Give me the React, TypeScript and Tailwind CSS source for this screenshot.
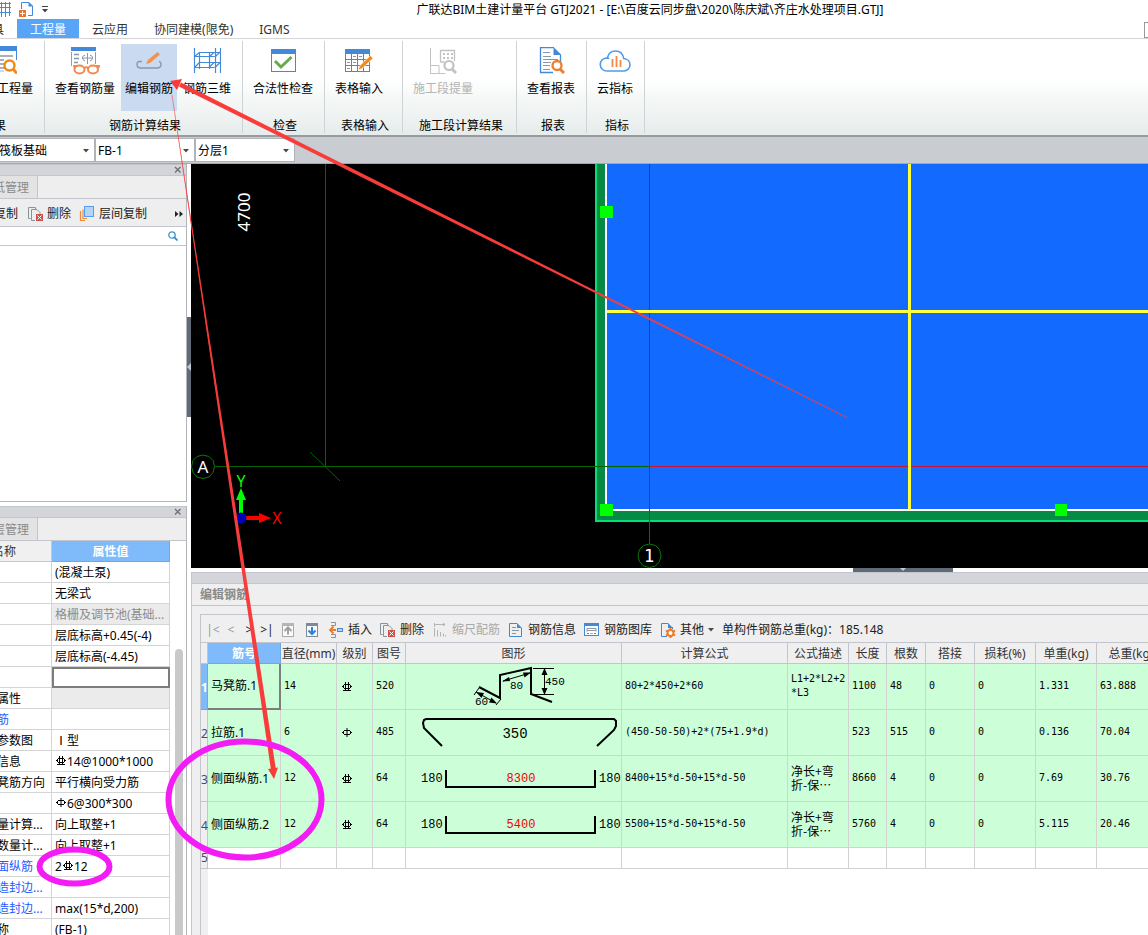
import type { ReactNode } from 'react'
import clsx from 'clsx'

const MONO = "font-['DejaVu_Sans_Mono','Noto_Sans_CJK_SC',monospace]"
const SVG_MONO = "'Liberation Mono', monospace"

/* ---------- rebar grade symbols ---------- */

function Grade({ level, className }: { level: 1 | 3; className?: string }) {
  return (
    <svg
      className={clsx('inline-block', className)}
      width="12"
      height="12"
      viewBox="0 0 12 12"
      fill="none"
      stroke="#000"
      role="img"
      aria-label={level === 1 ? 'HPB300' : 'HRB400'}
    >
      <path d="M3 3.500h6M3 7.500h6M2.500 4v3M9.500 4v3M1.500 5v1M10.500 5v1" />
      {level === 1 ? <path d="M6 1v9" /> : <path d="M4.500 1v9M7.500 1v9M2 9.500h8" />}
    </svg>
  )
}

/* ---------- ribbon icons ---------- */

function WindowSearchIcon() {
  return (
    <svg width="28" height="28" viewBox="0 0 28 28" fill="none">
      <path d="M3 4v21h12" stroke="#8fb3e0" />
      <rect x="3" y="0" width="25" height="5" fill="#4488d8" />
      <path d="M27.500 5v9" stroke="#4488d8" />
      <path d="M7 10h17M7 14h8M7 18h8M7 22h9" stroke="#8a97a5" strokeWidth="1.300" />
      <circle cx="20.500" cy="19.500" r="5" fill="#fff" stroke="#ef8a1d" strokeWidth="2.400" />
      <path d="M24 23l4 4.500" stroke="#ef8a1d" strokeWidth="3" />
    </svg>
  )
}

function GlassesIcon() {
  return (
    <svg width="30" height="30" viewBox="0 0 30 30" fill="none">
      <path d="M1.500 5v14M25.500 5v12" stroke="#6fa3e2" />
      <rect x="1" y="0" width="25" height="4" fill="#4488d8" />
      <path d="M4 7.500h5M4 11.500h5M4 15.500h4" stroke="#8a97a5" strokeWidth="1.300" />
      <path
        d="M17.500 6v11M15 8.500c-2 0-2.500 1-2.500 2.500s1 2.500 2.500 2.500M20 8.500c2 0 2.500 1 2.500 2.500s-1 2.500-2.500 2.500M12 11h11"
        stroke="#8a97a5"
      />
      <ellipse cx="9.500" cy="22.500" rx="5" ry="4" stroke="#f2894a" strokeWidth="2" fill="#fff" />
      <ellipse cx="23" cy="22.500" rx="5" ry="4" stroke="#f2894a" strokeWidth="2" fill="#fff" />
      <path d="M14 21c1.500-1 3-1 4.500 0M4.500 21l-.5-2h3M28.500 21l.5-2h-3" stroke="#f2894a" strokeWidth="1.800" />
    </svg>
  )
}

function EditRebarIcon() {
  return (
    <svg width="28" height="28" viewBox="0 0 28 28" fill="none">
      <path
        d="M7 14.500H4.500a2.500 2.500 0 0 0-2.500 3c0 2 1.500 3.500 4 3.500h16c2.500 0 4-1.500 4-3.500a2.500 2.500 0 0 0-2-3"
        stroke="#8a99a8"
        strokeWidth="1.400"
      />
      <path d="M11 17l2-4L22.500 5l2.500 2.500L15 16z" fill="#f2924f" />
    </svg>
  )
}

function Rebar3dIcon() {
  return (
    <svg width="28" height="28" viewBox="0 0 28 28" fill="none" stroke="#4488d8" strokeWidth="1.200">
      <path d="M1.500 1v25M6.500 5v17M16.500 5v17M22.500 1v25M27.500 1v25" />
      <path d="M1.500 9.500h20M6.500 5.500h21M1.500 20.500h20M6.500 15.500h21M1.500 9.500l5-4M1.500 20.500l5-5M16 10l5-4.500M16 20.500l5-5M22 10l5-5M22 20.500l5-5" />
    </svg>
  )
}

function CheckWindowIcon() {
  return (
    <svg width="28" height="28" viewBox="0 0 28 28" fill="none">
      <rect x="2.500" y="2.500" width="24" height="22" stroke="#4488d8" fill="#fff" />
      <rect x="2" y="2" width="25" height="5" fill="#4488d8" />
      <path d="M6 14l6 6L22.500 10" stroke="#6aa84f" strokeWidth="3" />
    </svg>
  )
}

function TableInputIcon() {
  return (
    <svg width="30" height="28" viewBox="0 0 30 28" fill="none">
      <rect x="1.500" y="2.500" width="24" height="22" stroke="#4488d8" fill="#fff" />
      <rect x="1" y="2" width="25" height="5" fill="#4488d8" />
      <path d="M1 12.500h25M1 18.500h25M7.500 7v17M13.500 7v17M19.500 7v17" stroke="#4488d8" />
      <path d="M9 9.500h3M15 9.500h3M3 15.500h3M9 15.500h3M3 21.500h3" stroke="#8a97a5" />
      <path d="M14 23l2-4.500L26.500 8.500l2.500 3L18 21.500z" fill="#ef8a1d" stroke="#fff" strokeWidth=".6" />
    </svg>
  )
}

function SectionQuantityIcon() {
  return (
    <svg width="28" height="28" viewBox="0 0 28 28" fill="none" stroke="#c2c2c2">
      <path d="M1.500 1v25.500h15M1.500 18.500h8.500v8" />
      <path d="M11.500 15V3.500h14V14M11.500 15h4" strokeWidth="1.300" />
      <path d="M14 7h2M18 7h2M22 7h2M14 11h2M18 11h2M22 11h2" strokeWidth="2" />
      <circle cx="20" cy="18.500" r="4.500" strokeWidth="2.200" fill="#fff" />
      <path d="M23 22l4 4" strokeWidth="3" />
    </svg>
  )
}

function ReportIcon() {
  return (
    <svg width="28" height="28" viewBox="0 0 28 28" fill="none">
      <path d="M23.500 8v7M17 .5H3.500v25H16" stroke="#4488d8" strokeWidth="1.300" />
      <path d="M16.500 0l8 8h-8z" fill="#4488d8" />
      <path d="M6 5.500h7M6 9.500h8M6 12.500h15M6 15.500h8M6 18.500h7M6 22.500h7" stroke="#8a97a5" />
      <circle cx="20" cy="18.500" r="4.500" fill="#fff" stroke="#ef7d2b" strokeWidth="2.300" />
      <path d="M23 22l4 4" stroke="#ef7d2b" strokeWidth="3" />
    </svg>
  )
}

function CloudIndexIcon() {
  return (
    <svg width="32" height="28" viewBox="0 0 32 28" fill="none">
      <path
        d="M8 24a6.500 6.500 0 0 1-.5-13c1 0 2 .2 2.700.7M8.500 10.500C9.500 6.500 12.500 4 16.500 4c4.500 0 7.500 3 8.200 7.500 3.800.3 6.300 3 6.300 6.300S28.300 24 25 24H8"
        stroke="#4f9bea"
        strokeWidth="1.600"
      />
      <path d="M13.500 12v8M17.500 9v11M21.500 13v7" stroke="#f2894a" strokeWidth="1.800" />
    </svg>
  )
}

/* ---------- small toolbar icons ---------- */

function DeleteIcon() {
  return (
    <svg width="16" height="16" viewBox="0 0 16 16" fill="none">
      <path d="M2.500 12.500h-2V1.500h7v1.500" stroke="#8794a0" />
      <path d="M7 14.500H3.500v-11H9l3 3V8" stroke="#8794a0" />
      <rect x="8" y="8" width="7" height="7" fill="#d0504c" />
      <path d="M9.500 9.500l4 4M13.500 9.500l-4 4" stroke="#fff" />
    </svg>
  )
}

function CopyLayersIcon() {
  return (
    <svg width="16" height="16" viewBox="0 0 16 16" fill="none">
      <path d="M1.500 5v9.500H6M4 3.500v9h4" stroke="#ef8a3a" strokeWidth="1.200" />
      <rect x="5.500" y=".5" width="9" height="10" fill="#b3d4fb" stroke="#5a9bee" />
    </svg>
  )
}

function MoveIcon({ down }: { down?: boolean }) {
  return (
    <svg width="16" height="16" viewBox="0 0 16 16" fill="none">
      <rect x="2.500" y="2.500" width="11" height="12" fill="#fafafa" stroke={down ? '#7b8b99' : '#a9a9a9'} />
      <rect x="2" y="1" width="12" height="3" fill={down ? '#7b8b99' : '#b5b5b5'} />
      {down ? (
        <path d="M8 5v7M4.500 8.500L8 12l3.500-3.500" stroke="#2f7fdc" strokeWidth="2" />
      ) : (
        <path d="M8 12.500V6M4.500 9L8 5.500 11.500 9" stroke="#a0a0a0" strokeWidth="2" />
      )}
    </svg>
  )
}

function InsertIcon() {
  return (
    <svg width="16" height="16" viewBox="0 0 16 16" fill="none">
      <path d="M3 .5h4.500v3H3M3 15.500h4.500v-3H3" stroke="#8794a0" />
      <path d="M2 8h6M5.500 4.500L2 8l3.500 3.500" stroke="#f07a28" strokeWidth="1.800" />
      <rect x="9.500" y="6.500" width="5" height="3" fill="#b3d4fb" stroke="#4488d8" />
    </svg>
  )
}

function ScaleIcon() {
  return (
    <svg width="16" height="16" viewBox="0 0 16 16" fill="none" stroke="#b4b4b4">
      <path d="M2.500 1v4M2 2.500h11M11 1l2 1.500L11 4M2.500 6v8.500M5.500 8v6.500M8.500 10v4.500M11.500 11.500v3M13.500 13v1.500" />
    </svg>
  )
}

function DocInfoIcon() {
  return (
    <svg width="16" height="16" viewBox="0 0 16 16" fill="none">
      <path d="M9 1.500H1.500v13h12V6" stroke="#4488d8" />
      <path d="M9 1l5 5H9z" fill="#4488d8" />
      <path d="M4 5.500h4M4 8.500h7M4 11.500h4" stroke="#8a97a5" />
    </svg>
  )
}

function LibraryIcon() {
  return (
    <svg width="16" height="16" viewBox="0 0 16 16" fill="none">
      <rect x=".5" y="1.500" width="14" height="12" fill="#fff" stroke="#4488d8" />
      <rect x="0" y="1" width="15" height="3" fill="#4488d8" />
      <path d="M3 9.500v-3h9v3M3 8.500h9" stroke="#8a97a5" />
      <path d="M3 11.500h2" stroke="#d0504c" />
      <path d="M6 11.500h3" stroke="#f0b23a" />
      <path d="M10 11.500h2" stroke="#6aa84f" />
    </svg>
  )
}

function OtherIcon() {
  return (
    <svg width="16" height="16" viewBox="0 0 16 16" fill="none">
      <path d="M7 14.500H1.500v-13H8M12.500 5v2" stroke="#4488d8" />
      <path d="M8 1l5 5H8z" fill="#4488d8" />
      <circle cx="10.500" cy="11" r="3" stroke="#f07a28" strokeWidth="2" fill="#fff" />
      <path d="M10.500 6v2M10.500 14v2M6 8.500l1.500 1M13.500 12.500l1.500 1M15 8.500l-1.500 1M7.500 12.500L6 13.500" stroke="#f07a28" strokeWidth="2" />
    </svg>
  )
}

function CloseIcon() {
  return (
    <svg width="8" height="8" viewBox="0 0 8 8" stroke="#6e7277" strokeWidth="1.400">
      <path d="M1 1l5.500 5.500M6.500 1L1 6.500" />
    </svg>
  )
}

function Caret() {
  return (
    <svg width="6" height="4" viewBox="0 0 6 4" fill="#4a4a4a">
      <path d="M0 0h6L3 3.500z" />
    </svg>
  )
}

/* ---------- header ---------- */

function TitleBar() {
  return (
    <div className="flex h-[19px] shrink-0 items-center bg-white">
      <div className="flex w-[160px] shrink-0 items-center gap-2">
        <svg width="11" height="16" viewBox="0 0 11 16" fill="none" stroke="#4488d8">
          <path d="M0 1.500h11M0 5.500h11M0 10.500h11M1.500 0v15M5.500 0v15M9.500 0v14" />
        </svg>
        <svg width="15" height="16" viewBox="0 0 15 16" fill="none">
          <path d="M2.500 7V.5H10L13.500 4v9.500H9" stroke="#4488d8" />
          <path d="M9.500 0L14 4.500H9.500z" fill="#4488d8" />
          <rect x="0" y="8" width="7" height="7" fill="#e8732a" />
          <path d="M3.500 9v5M1 11.500h5" stroke="#fff" />
        </svg>
        <svg width="6" height="7" viewBox="0 0 6 7" fill="#444">
          <path d="M0 0h6v1H0zM0 3h6L3 6.500z" />
        </svg>
      </div>
      <h1 className="-ml-2 flex-1 text-center text-xs leading-[19px] font-normal whitespace-nowrap text-black">
        广联达BIM土建计量平台 GTJ2021 - [E:\百度云同步盘\2020\陈庆斌\齐庄水处理项目.GTJ]
      </h1>
    </div>
  )
}

const TABS = ['工程量', '云应用', '协同建模(限免)', 'IGMS']

function TabStrip() {
  return (
    <nav className="flex h-5 shrink-0 items-end overflow-hidden border-b border-[#d5d5d5] bg-white">
      <button className="-ml-2 w-[25px] pt-0.5 text-left leading-[17px] text-[#333]">具</button>
      {TABS.map((tab, i) => (
        <button
          key={tab}
          className={clsx(
            'px-[13px] pt-0.5 leading-[17px] whitespace-nowrap',
            i === 0 ? 'bg-[#58a5f8] text-white' : 'text-[#333]'
          )}
        >
          {tab}
        </button>
      ))}
      <span className="ml-auto h-4 w-1 border-y border-l border-[#999]" />
    </nav>
  )
}

interface Tool {
  label: string
  icon: ReactNode
  active?: boolean
  disabled?: boolean
}

const RIBBON: { title: string; width: string; tools: Tool[] }[] = [
  {
    title: '钢筋计算结果',
    width: 'w-[198px]',
    tools: [
      { label: '查看钢筋量', icon: <GlassesIcon /> },
      { label: '编辑钢筋', icon: <EditRebarIcon />, active: true },
      { label: '钢筋三维', icon: <Rebar3dIcon /> },
    ],
  },
  { title: '检查', width: 'w-[82px]', tools: [{ label: '合法性检查', icon: <CheckWindowIcon /> }] },
  { title: '表格输入', width: 'w-[78px]', tools: [{ label: '表格输入', icon: <TableInputIcon /> }] },
  {
    title: '施工段计算结果',
    width: 'w-[114px]',
    tools: [{ label: '施工段提量', icon: <SectionQuantityIcon />, disabled: true }],
  },
  { title: '报表', width: 'w-[70px]', tools: [{ label: '查看报表', icon: <ReportIcon /> }] },
  { title: '指标', width: 'w-[58px]', tools: [{ label: '云指标', icon: <CloudIndexIcon /> }] },
]

function Ribbon() {
  return (
    <div className="flex h-[98px] shrink-0 overflow-hidden border-b-2 border-[#999c9e] bg-linear-to-b from-white from-40% to-[#e6eceb] py-[2px]">
      <div className="flex w-[45px] shrink-0 flex-col items-end border-r border-[#d0d3d4]">
        <button className="mt-[3px] flex h-[67px] shrink-0 flex-col items-end pr-[11px]">
          <span className="mr-4 flex h-[33px] items-start pt-0.5">
            <WindowSearchIcon />
          </span>
          <span className="leading-6 whitespace-nowrap">工程量</span>
        </button>
        <div className="-ml-1.5 self-start pt-[3px] leading-6">果</div>
      </div>
      {RIBBON.map((group) => (
        <div key={group.title} className={clsx('flex shrink-0 flex-col border-r border-[#d0d3d4]', group.width)}>
          <div className="mt-[3px] flex gap-0.5 pl-1.5">
            {group.tools.map((tool) => (
              <button
                key={tool.label}
                disabled={tool.disabled}
                className={clsx(
                  'flex h-[67px] flex-col items-center px-1 whitespace-nowrap',
                  tool.active && 'bg-[#c9daf1]',
                  tool.disabled ? 'text-[#b3b3b3]' : 'text-black'
                )}
              >
                <span className="flex h-[33px] items-start pt-[3px]">{tool.icon}</span>
                <span className="leading-6">{tool.label}</span>
              </button>
            ))}
          </div>
          <div className="pt-[3px] pl-[3px] text-center leading-6">{group.title}</div>
        </div>
      ))}
    </div>
  )
}

function ComboBox({ label, value, className }: { label: string; value: string; className: string }) {
  return (
    <div className={clsx('relative h-6 border border-[#b0b3b8] bg-white', className)}>
      <select
        aria-label={label}
        defaultValue={value}
        className="h-full w-full appearance-none bg-transparent pt-0.5 pl-0.5 text-xs text-black outline-none"
      >
        <option>{value}</option>
      </select>
      <span className="pointer-events-none absolute top-2.5 right-[5px]">
        <Caret />
      </span>
    </div>
  )
}

function ContextBar() {
  return (
    <div className="flex h-[27px] shrink-0 items-center overflow-hidden border-b border-[#a4a8ad] bg-[#c9ccd1]">
      <ComboBox label="构件类型" value="筏板基础" className="-ml-1 w-[99px]" />
      <ComboBox label="构件" value="FB-1" className="w-[100px]" />
      <ComboBox label="分层" value="分层1" className="w-[100px]" />
    </div>
  )
}

/* ---------- left side ---------- */

function PanelTitle() {
  return (
    <div className="flex h-3 shrink-0 items-center justify-end border-y border-[#c3c5cc] bg-[#d4d5da] pr-1">
      <button aria-label="关闭">
        <CloseIcon />
      </button>
    </div>
  )
}

function PanelTab({ label }: { label: string }) {
  return (
    <div className="flex h-[23px] shrink-0 border-b border-[#c3c5cc]">
      <button className="flex w-[38px] items-center justify-end border-r border-[#c3c5cc] bg-[#e3e3e3] pt-0.5 pr-2 whitespace-nowrap text-[#8a8a8a]">
        {label}
      </button>
    </div>
  )
}

function DrawingPanel() {
  return (
    <section className="flex h-[338px] shrink-0 flex-col overflow-hidden border-r border-b border-[#b3b5bb] bg-[#eee]">
      <PanelTitle />
      <PanelTab label="纸管理" />
      <div className="flex h-7 shrink-0 items-center border-b border-[#c3c5cc] pt-0.5 pr-[3px] text-[#222]">
        <button className="-ml-1.5 pr-2.5 whitespace-nowrap">复制</button>
        <button className="flex items-center gap-[3px] pr-2 whitespace-nowrap">
          <DeleteIcon />
          删除
        </button>
        <button className="flex items-center gap-1 whitespace-nowrap">
          <CopyLayersIcon />
          层间复制
        </button>
        <svg className="ml-auto shrink-0" width="8" height="6" viewBox="0 0 8 6" fill="#222">
          <path d="M0 0l3.500 3L0 6zM4.500 0L8 3 4.500 6z" />
        </svg>
      </div>
      <div className="flex h-[19px] shrink-0 items-center border-b border-[#c3c5cc] bg-white pr-2">
        <input aria-label="搜索" className="h-full min-w-0 flex-1 bg-transparent px-1 outline-none" />
        <svg width="10" height="10" viewBox="0 0 10 10" fill="none" stroke="#3d93c9">
          <circle cx="4" cy="4" r="3.200" strokeWidth="1.300" />
          <path d="M6.500 6.500l3 3" strokeWidth="1.800" />
        </svg>
      </div>
      <div className="flex-1 bg-white" />
    </section>
  )
}

interface Property {
  name?: string
  value?: ReactNode
  blue?: boolean
  muted?: boolean
  selected?: boolean
}

const PROPERTIES: Property[] = [
  { value: '(混凝土泵)' },
  { value: '无梁式' },
  { value: '格栅及调节池(基础...', muted: true },
  { value: '层底标高+0.45(-4)' },
  { value: '层底标高(-4.45)' },
  { selected: true },
  { name: '属性', muted: true },
  { name: '筋', blue: true },
  { name: '参数图', value: 'Ⅰ型' },
  { name: '信息', value: <><Grade level={3} className="align-[-1px]" />14@1000*1000</> },
  { name: '凳筋方向', value: '平行横向受力筋' },
  { value: <><Grade level={1} className="align-[-1px]" />6@300*300</> },
  { name: '量计算...', value: '向上取整+1' },
  { name: '数量计...', value: '向上取整+1' },
  { name: '面纵筋', value: <>2<Grade level={3} className="align-[-1px]" />12</>, blue: true },
  { name: '造封边...', blue: true },
  { name: '造封边...', value: 'max(15*d,200)', blue: true },
  { name: '称', value: '(FB-1)' },
]

function PropertyPanel() {
  return (
    <section className="flex min-h-0 flex-1 flex-col overflow-hidden border-r border-[#b3b5bb] bg-[#eee]">
      <PanelTitle />
      <PanelTab label="层管理" />
      <div className="flex min-h-0 flex-1 overflow-hidden bg-white">
        <table className="w-[170px] table-fixed border-separate border-spacing-0 self-start">
          <colgroup>
            <col className="w-[52px]" />
            <col />
          </colgroup>
          <thead>
            <tr className="h-[21px] leading-[18px]">
              <th className="border-r border-b border-[#c9c9c9] bg-[#f0f0f0] p-0 pt-0.5 text-left font-normal text-[#333]">
                <span className="-ml-2">名称</span>
              </th>
              <th className="border-r border-b border-[#6aa9ee] bg-[#7fbafa] p-0 pt-0.5 font-bold text-white">属性值</th>
            </tr>
          </thead>
          <tbody>
            {PROPERTIES.map((p, i) => (
              <tr key={i} className="h-[21px] leading-[18px]">
                <td className="overflow-hidden border-r border-b border-[#d4d4d4] p-0 pt-0.5 whitespace-nowrap">
                  <span className={clsx('-ml-[3px]', p.blue && 'text-[#1f5bff]')}>{p.name}</span>
                </td>
                <td
                  className={clsx(
                    'overflow-hidden border-r border-b border-[#d4d4d4] p-0 pt-0.5 pl-[3px] whitespace-nowrap',
                    p.muted && 'bg-[#ebebeb] text-[#8c8c8c]',
                    p.selected && 'outline-2 -outline-offset-2 outline-[#7d7d7d]'
                  )}
                >
                  {p.value}
                </td>
              </tr>
            ))}
          </tbody>
        </table>
        <div className="flex flex-1 justify-center pt-[108px] pl-0.5">
          <div className="h-full w-2 rounded-t-full bg-[#c9c9c9]" />
        </div>
      </div>
    </section>
  )
}

/* ---------- drawing canvas ---------- */

function ModelCanvas() {
  return (
    <div className="h-[404px] shrink-0 overflow-hidden bg-black">
      <svg width="100%" height="404" fill="none">
        {/* slab edge and body */}
        <rect x="404" y="-10" width="2000" height="368" fill="#00e073" />
        <rect x="406" y="-10" width="2000" height="366" fill="#068a46" />
        <rect x="414" y="-10" width="2000" height="357" fill="#fff" />
        <rect x="416" y="-10" width="2000" height="355" fill="#126aff" />

        {/* axis grid */}
        <path d="M134.500 0v302M24 302.500h434M119 288l30 29" stroke="#046404" />
        <path d="M458.500 0v302" stroke="#1a3fa6" />
        <path d="M458.500 302v78" stroke="#0a6a1e" />
        <rect x="459" y="302" width="2000" height="1" fill="#c81432" />

        {/* beams */}
        <rect x="416" y="146" width="2000" height="3" fill="#ffff3c" />
        <rect x="717" y="0" width="3" height="346" fill="#ffff3c" />

        {/* grips */}
        <g fill="#00ff00">
          <rect x="409" y="42" width="13" height="12" />
          <rect x="409" y="340" width="13" height="12" />
          <rect x="864" y="340" width="12" height="12" />
        </g>

        {/* axis heads */}
        <path d="M12 291l6 1.500 4 4 1.500 6-1.500 6-4 4.500-6 1.500-6-1.500-4-4.500-1.500-6 1.500-6 4-4z" stroke="#0a7a0a" />
        <path d="M458.500 380l6 1.500 4 4 1.500 6-1.500 6-4 4.500-6 1.500-6-1.500-4-4.500-1.500-6 1.500-6 4-4z" stroke="#0a7a0a" />
        <g fill="#fff" fontSize="17" fontFamily="'Noto Sans', sans-serif" textAnchor="middle">
          <text x="12" y="309">A</text>
          <text x="458" y="398" fontFamily="'DejaVu Sans Mono', monospace">1</text>
          <text transform="translate(59 48) rotate(-90)">4700</text>
        </g>

        {/* coordinate system */}
        <path d="M48 335h4v19h-4zM50 324l5 12H45z" fill="#00ff00" />
        <path d="M50 352h20v4H50zM80 354l-12 5v-10z" fill="#ff0000" />
        <circle cx="50" cy="354" r="5.500" fill="#0000b4" />
        <g fontSize="16" fontFamily="'Noto Sans', sans-serif" textAnchor="middle">
          <text x="50" y="323" fill="#00ff00">Y</text>
          <text x="86" y="360" fill="#ff0000">X</text>
        </g>
      </svg>
    </div>
  )
}

/* ---------- rebar editor ---------- */

function ShapeMaJia() {
  return (
    <svg className="block" width="215" height="45" fill="none" stroke="#000">
      <path d="M73 23l21 11V11l31-7v26l21 8" strokeWidth="2" />
      <path d="M127 4.500h21M127 30.500h21M138.500 4v26M97 17l27-8M70 28l20 11M68 31l5-7M90 41l5-6" />
      <path
        d="M138.500 4l3 7h-6zM138.500 31l3-7h-6zM96 17.500l7-4.500 1 4zM125 8.500l-8 0 1.500 5zM70 28l8 1-2.500 5zM91 39.500l-8-1 2.500-5z"
        fill="#000"
        stroke="none"
      />
      <g fill="#000" stroke="none" fontSize="11" fontFamily={SVG_MONO}>
        <text x="139" y="21">450</text>
        <text x="104" y="25">80</text>
        <text x="69" y="41">60</text>
      </g>
    </svg>
  )
}

function ShapeLaJin() {
  return (
    <svg className="block" width="215" height="45" fill="none" stroke="#000">
      <path d="M36 36L18 18l-1-5 1-3 2-1h188l2 2v5l-2 4-17 16" strokeWidth="2" />
      <text x="109" y="28" fill="#000" stroke="none" fontSize="14" textAnchor="middle" fontFamily={SVG_MONO}>
        350
      </text>
    </svg>
  )
}

function ShapeU({ length }: { length: string }) {
  return (
    <svg className="block" width="215" height="45" fill="none">
      <path d="M40 14v17h149V14" stroke="#000" strokeWidth="2" />
      <g fontSize="12" fontFamily={SVG_MONO} fill="#000">
        <text x="15" y="26">180</text>
        <text x="115" y="26" fill="#f00000" textAnchor="middle">
          {length}
        </text>
        <text x="193" y="26">180</text>
      </g>
    </svg>
  )
}

const COLUMNS = [
  { title: '筋号', width: 'w-[73px]' },
  { title: '直径(mm)', width: 'w-[56px]' },
  { title: '级别', width: 'w-[36px]' },
  { title: '图号', width: 'w-[33px]' },
  { title: '图形', width: 'w-[216px]' },
  { title: '计算公式', width: 'w-[166px]' },
  { title: '公式描述', width: 'w-[61px]' },
  { title: '长度', width: 'w-[38px]' },
  { title: '根数', width: 'w-[39px]' },
  { title: '搭接', width: 'w-[49px]' },
  { title: '损耗(%)', width: 'w-[61px]' },
  { title: '单重(kg)', width: 'w-[61px]' },
  { title: '总重(kg)', width: 'w-[69px]' },
]

const netLength = (
  <span lang="zh-CN" className="block font-['Noto_Sans_CJK_SC',sans-serif] text-xs leading-[14px]">
    净长+弯
    <br />
    折-保⋯
  </span>
)

const ROWS: ReactNode[][] = [
  [
    '马凳筋.1', '14', <Grade level={3} />, '520', <ShapeMaJia />, '80+2*450+2*60',
    <span className="block leading-[14px]">L1+2*L2+2<br />*L3</span>,
    '1100', '48', '0', '0', '1.331', '63.888',
  ],
  ['拉筋.1', '6', <Grade level={1} />, '485', <ShapeLaJin />, '(450-50-50)+2*(75+1.9*d)', '', '523', '515', '0', '0', '0.136', '70.04'],
  ['侧面纵筋.1', '12', <Grade level={3} />, '64', <ShapeU length="8300" />, '8400+15*d-50+15*d-50', netLength, '8660', '4', '0', '0', '7.69', '30.76'],
  ['侧面纵筋.2', '12', <Grade level={3} />, '64', <ShapeU length="5400" />, '5500+15*d-50+15*d-50', netLength, '5760', '4', '0', '0', '5.115', '20.46'],
]

function RebarTable() {
  return (
    <table className="w-[965px] table-fixed border-separate border-spacing-0">
      <colgroup>
        <col className="w-[7px]" />
        {COLUMNS.map((c) => (
          <col key={c.title} className={c.width} />
        ))}
      </colgroup>
      <thead>
        <tr className="h-[21px] bg-[#efefef]">
          <td className="border-r border-b border-[#c3c5cc] p-0" />
          {COLUMNS.map((c, i) => (
            <th
              key={c.title}
              scope="col"
              className={clsx(
                'border-r border-b p-0 pt-px whitespace-nowrap',
                i === 0 ? 'border-[#6aa9ee] bg-[#7fbafa] font-bold text-white' : 'border-[#c3c5cc] font-normal text-[#333]'
              )}
            >
              {c.title}
            </th>
          ))}
        </tr>
      </thead>
      <tbody>
        {ROWS.map((row, r) => (
          <tr key={r} className="h-[46px] bg-[#ccffd8]">
            <th
              scope="row"
              className={clsx(
                'border-r border-b p-0 pt-0.5',
                r === 0 ? 'border-[#6aa9ee] bg-[#7fbafa] font-bold text-white' : 'border-[#c3c5cc] bg-[#efefef] font-normal text-[#444a66]'
              )}
            >
              {r + 1}
            </th>
            {row.map((cell, c) => {
              const current = r === 0 && c === 0
              return (
                <td
                  key={c}
                  className={clsx(
                    'p-0 text-black',
                    current ? 'border-r-2 border-b-2 border-[#7d7d7d]' : 'border-r border-b border-[#d2d2d2]',
                    c !== 4 && c !== 2 && 'pl-[3px]',
                    c !== 4 && c !== 2 && c > 0 && 'pb-0.5',
                    c === 2 && 'pl-1',
                    c > 0 && 'text-[10px]',
                    c > 0 && MONO
                  )}
                >
                  {cell}
                </td>
              )
            })}
          </tr>
        ))}
        <tr className="h-[21px] bg-white">
          <th scope="row" className="border-r border-b border-[#c3c5cc] bg-[#efefef] p-0 font-normal text-[#444a66]">
            5
          </th>
          {COLUMNS.map((c) => (
            <td key={c.title} className="border-r border-b border-[#d2d2d2] p-0" />
          ))}
        </tr>
      </tbody>
    </table>
  )
}

const TOOLBAR = [
  { label: '插入', icon: <InsertIcon /> },
  { label: '删除', icon: <DeleteIcon /> },
  { label: '缩尺配筋', icon: <ScaleIcon />, disabled: true },
  { label: '钢筋信息', icon: <DocInfoIcon /> },
  { label: '钢筋图库', icon: <LibraryIcon /> },
  { label: '其他', icon: <OtherIcon />, menu: true },
]

function RebarToolbar() {
  return (
    <div className="flex h-7 shrink-0 items-center gap-2 border-b border-[#c3c5cc] pt-0.5 pl-[3px] whitespace-nowrap text-[#222]">
      <div className="-mr-1 flex">
        <button disabled className="w-[18px] text-[#9a9a9a]">|&lt;</button>
        <button disabled className="w-[18px] text-[#9a9a9a]">&lt;</button>
        <button className="w-[18px]">&gt;</button>
        <button className="w-[18px]">&gt;|</button>
      </div>
      <button aria-label="上移"><MoveIcon /></button>
      <button aria-label="下移"><MoveIcon down /></button>
      {TOOLBAR.map((t) => (
        <button key={t.label} disabled={t.disabled} className="flex items-center gap-1 disabled:text-[#a9a9a9]">
          {t.icon}
          {t.label}
          {t.menu && <Caret />}
        </button>
      ))}
      <span>单构件钢筋总重(kg)：185.148</span>
    </div>
  )
}

function RebarEditor() {
  return (
    <section className="flex min-h-0 flex-1 flex-col border-l border-[#c3c5cc] bg-[#efefef]">
      <div className="h-3 shrink-0 border-y border-[#c3c5cc] bg-[#d4d5da]" />
      <h2 className="h-[22px] shrink-0 border-b border-[#c3c5cc] pl-2 leading-[21px] font-bold text-[#8a8a8a]">编辑钢筋</h2>
      <div className="mt-2 ml-2 flex min-h-0 flex-1 flex-col border-t border-l border-[#c3c5cc]">
        <RebarToolbar />
        <div className="flex min-h-0 flex-1 flex-col overflow-hidden">
          <RebarTable />
          <div className="ml-[7px] flex-1 bg-white" />
        </div>
      </div>
    </section>
  )
}

/* ---------- arrows and circles drawn over the window ---------- */

function Annotations() {
  return (
    <svg className="pointer-events-none absolute top-0 left-0" width="1148" height="935" fill="none">
      <path d="M847.500 418.200l.3-.6L181 82.500l-2 4z" fill="#f83c3c" />
      <path d="M170 81l12-2-5 11z" fill="#f83c3c" />
      <path d="M172 95L271 770h5z" fill="#f83c3c" />
      <path d="M172 95l50 335" stroke="#f83c3c" strokeOpacity=".5" />
      <path d="M274 779l-6-10 10-1.500z" fill="#f83c3c" />
      <ellipse cx="245" cy="799.500" rx="76.500" ry="58" stroke="#f41cf4" strokeWidth="6" />
      <ellipse cx="74.500" cy="866.500" rx="35" ry="17" stroke="#f41cf4" strokeWidth="6" />
    </svg>
  )
}

export default function App() {
  return (
    <div className="relative flex h-screen flex-col overflow-hidden bg-white font-['Noto_Sans','Noto_Sans_CJK_SC',sans-serif] text-xs text-black">
      <TitleBar />
      <TabStrip />
      <Ribbon />
      <ContextBar />
      <main className="flex min-h-0 flex-1">
        <aside className="flex w-[187px] shrink-0 flex-col gap-1">
          <DrawingPanel />
          <PropertyPanel />
        </aside>
        <div className="w-1 shrink-0 pt-[153px]">
          <div className="flex h-[100px] items-center bg-[#5f6a76]">
            <svg width="4" height="8" viewBox="0 0 4 8" fill="#c4c9ce">
              <path d="M4 0v8L0 4z" />
            </svg>
          </div>
        </div>
        <div className="flex min-w-0 flex-1 flex-col">
          <ModelCanvas />
          <div className="flex h-1 shrink-0 justify-end pr-[195px]">
            <div className="flex w-[100px] items-start justify-center bg-[#5f6a76]">
              <svg width="6" height="3" viewBox="0 0 6 3" fill="#c4c9ce">
                <path d="M0 0h6L3 3z" />
              </svg>
            </div>
          </div>
          <RebarEditor />
        </div>
      </main>
      <Annotations />
    </div>
  )
}
